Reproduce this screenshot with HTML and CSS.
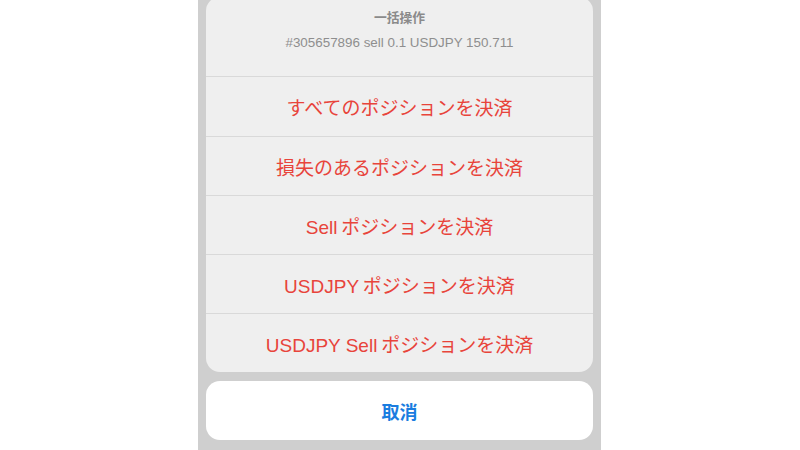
FILE: index.html
```html
<!DOCTYPE html>
<html lang="ja">
<head>
  <meta charset="UTF-8" />
  <meta name="viewport" content="width=device-width, initial-scale=1.0"/>
  <title>一括操作</title>
  <link rel="stylesheet" href="styles.css">
</head>
<body>

  <div class="screen">
    <div class="sheet">
      <div class="sheet-header">
        <p class="sheet-title">一括操作</p>
        <p class="sheet-sub">#305657896 sell 0.1 USDJPY 150.711</p>
      </div>
      <button class="action">すべてのポジションを決済</button>
      <button class="action">損失のあるポジションを決済</button>
      <button class="action">Sell&thinsp;ポジションを決済</button>
      <button class="action">USDJPY&thinsp;ポジションを決済</button>
      <button class="action">USDJPY Sell&thinsp;ポジションを決済</button>
    </div>

    <button class="cancel">取消</button>
  </div>

</body>
</html>
```

FILE: styles.css
```css
body {
  margin: 0;
  background: #ffffff;
  font-family: "Liberation Sans", "Noto Sans CJK JP", sans-serif;
  height: 450px;
  overflow: hidden;
}

.screen {
  width: 403px;
  height: 450px;
  margin-left: 198px;
  background: #cfcfcf;
  padding: 0 8px;
  box-sizing: border-box;
  display: flex;
  flex-direction: column;
}

.sheet {
  margin-top: -3px;
  background: #efefef;
  border-radius: 14px;
  display: flex;
  flex-direction: column;
  overflow: hidden;
}

.sheet-header {
  height: 79px;
  border-bottom: 1px solid #d9d9d9;
  display: flex;
  flex-direction: column;
  align-items: center;
}

.sheet-title {
  margin: 14px 0 0;
  font-size: 12.8px;
  font-weight: bold;
  color: #8a8a8a;
  line-height: 14px;
}

.sheet-sub {
  margin: 10px 0 0;
  font-size: 13.4px;
  color: #8e8e8e;
  line-height: 16px;
}

.action {
  height: 59px;
  border: none;
  border-top: 1px solid #d9d9d9;
  background: transparent;
  font-family: inherit;
  font-size: 19px;
  color: #e8443b;
  padding: 0;
}

.sheet-header + .action {
  border-top: none;
}

.cancel {
  margin-top: 9px;
  height: 59px;
  border: none;
  border-radius: 14px;
  background: #ffffff;
  font-family: inherit;
  font-size: 18px;
  font-weight: bold;
  color: #1a7de0;
  padding: 0;
}
```
